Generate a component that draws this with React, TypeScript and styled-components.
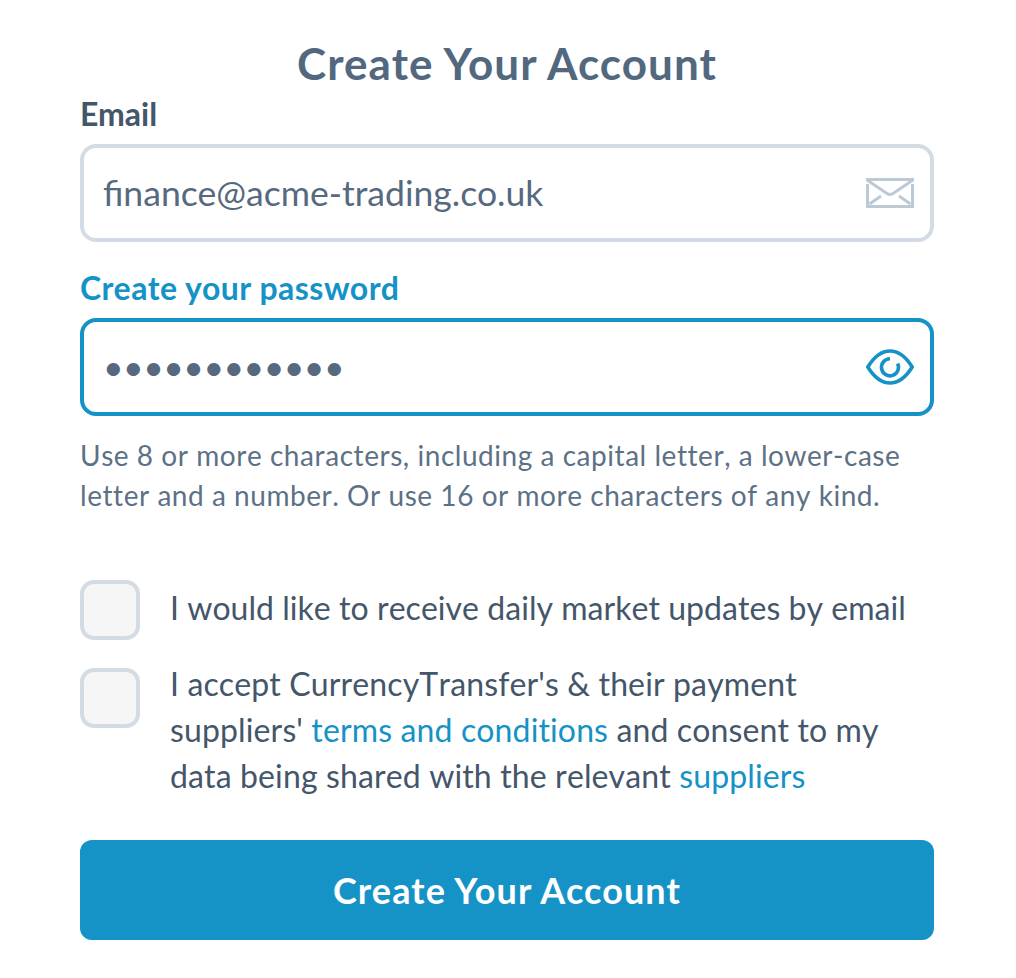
import React from "react";
import styled, { createGlobalStyle } from "styled-components";

const GlobalStyle = createGlobalStyle`
  html, body {
    margin: 0;
    padding: 0;
    background: #fff;
  }
  body {
    font-family: Lato, "Liberation Sans", sans-serif;
  }
`;

const Form = styled.form`
  display: flex;
  flex-direction: column;
  width: 854px;
  margin-left: 80px;
  padding-top: 35px;
`;

const Title = styled.h1`
  margin: 0 0 5px;
  font-size: 44px;
  line-height: 56px;
  letter-spacing: 1.05px;
  font-weight: 700;
  color: #51687f;
  text-align: center;
`;

const Label = styled.label<{ $active?: boolean }>`
  display: block;
  height: 48px;
  font-size: 32px;
  line-height: 36px;
  letter-spacing: ${(p) => (p.$active ? "0.5px" : "0")};
  font-weight: 700;
  color: ${(p) => (p.$active ? "#1592c6" : "#44566a")};
`;

const InputWrap = styled.div<{ $active?: boolean }>`
  display: flex;
  align-items: center;
  box-sizing: border-box;
  height: 98px;
  padding: 0 16px 0 19px;
  border: 4px solid ${(p) => (p.$active ? "#1592c6" : "#d3dce5")};
  border-radius: 16px;
  background: #fff;
`;

const Input = styled.input`
  flex: 1;
  min-width: 0;
  margin-top: -2px;
  padding: 0;
  border: 0;
  outline: 0;
  font-family: inherit;
  font-size: 35.6px;
  letter-spacing: ${(p) => (p.type === "password" ? "-0.55px" : "normal")};
  color: #56697f;
  background: transparent;
`;

const Hint = styled.p`
  margin: 19px 0 0;
  font-size: 28px;
  line-height: 40px;
  letter-spacing: 0.54px;
  font-kerning: none;
  color: #5d7186;
`;

const PasswordLabel = styled(Label)`
  margin-top: 28px;
`;

const Checks = styled.div`
  display: flex;
  flex-direction: column;
  gap: 28px;
  margin-top: 65px;
`;

const CheckRow = styled.div`
  display: flex;
  gap: 30px;
  align-items: flex-start;
`;

const Box = styled.span`
  flex: none;
  box-sizing: border-box;
  width: 60px;
  height: 60px;
  border: 4px solid #d3dce5;
  border-radius: 14px;
  background: #f6f6f6;
`;

const CheckText = styled.div<{ $multiline?: boolean }>`
  margin-top: ${(p) => (p.$multiline ? "-7px" : "5px")};
  font-size: 32px;
  line-height: 46px;
  letter-spacing: ${(p) => (p.$multiline ? "0.13px" : "0.04px")};
  font-kerning: none;
  color: #44566a;
`;

const Link = styled.a`
  color: #1592c6;
  text-decoration: none;
`;

const Submit = styled.button`
  height: 100px;
  margin-top: 41px;
  border: 0;
  border-radius: 12px;
  background: #1592c6;
  color: #fff;
  font-family: inherit;
  font-size: 36px;
  letter-spacing: 1.1px;
  font-weight: 700;
`;

const MailIcon = () => (
  <svg width="48" height="30" viewBox="0 0 48 30" fill="none" stroke="#bccad6" strokeWidth="3">
    <path d="M0 1.5 H48" />
    <path d="M1.5 6 V28.5 H46.5 V6" />
    <path d="M1 2 L21 15.5 Q24 17.5 27 15.5 L47 2" />
    <path d="M3.5 26 L15 18 M44.5 26 L33 18" />
  </svg>
);

const EyeIcon = () => (
  <svg width="48" height="36" viewBox="0 0 48 36" fill="none" stroke="#1592c6" strokeWidth="3.6">
    <path d="M1.8 18 C8 8 16 2 24 2 C32 2 40 8 46.2 18 C40 28 32 34 24 34 C16 34 8 28 1.8 18 Z" />
    <path d="M31.6 14.5 A8.5 8.5 0 1 1 24 9.8" />
  </svg>
);

export default function App() {
  return (
    <>
      <GlobalStyle />
      <Form onSubmit={(e) => e.preventDefault()}>
        <Title>Create Your Account</Title>
        <Label htmlFor="email">Email</Label>
        <InputWrap>
          <Input id="email" type="text" defaultValue="finance@acme-trading.co.uk" />
          <MailIcon />
        </InputWrap>
        <PasswordLabel htmlFor="password" $active>
          Create your password
        </PasswordLabel>
        <InputWrap $active>
          <Input id="password" type="password" defaultValue="Password1234" />
          <EyeIcon />
        </InputWrap>
        <Hint>
          Use 8 or more characters, including a capital letter, a lower-case
          <br />
          letter and a number. Or use 16 or more characters of any kind.
        </Hint>
        <Checks>
          <CheckRow>
            <Box />
            <CheckText>I would like to receive daily market updates by email</CheckText>
          </CheckRow>
          <CheckRow>
            <Box />
            <CheckText $multiline>
              I accept CurrencyTransfer's &amp; their payment
              <br />
              suppliers' <Link href="#">terms and conditions</Link> and consent to my
              <br />
              data being shared with the relevant <Link href="#">suppliers</Link>
            </CheckText>
          </CheckRow>
        </Checks>
        <Submit type="submit">Create Your Account</Submit>
      </Form>
    </>
  );
}
